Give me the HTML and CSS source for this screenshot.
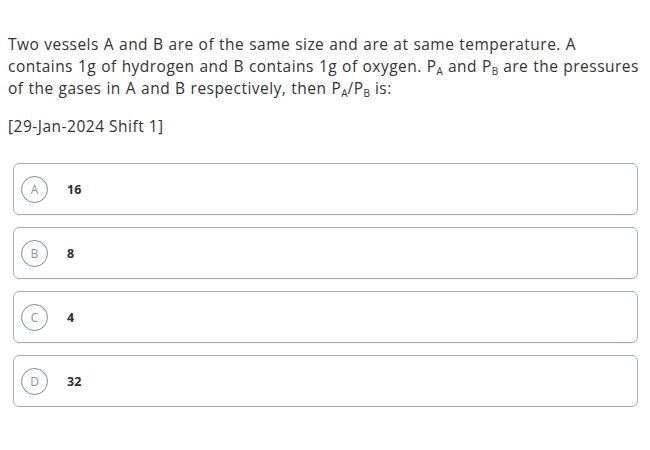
FILE: index.html
```html
<!DOCTYPE html>
<html>
<head>
<meta charset="utf-8">
<link rel="stylesheet" href="styles.css">
</head>
<body>
<div class="question">
  <p class="stem">Two vessels A and B are of the same size and are at same temperature. A<br>contains 1g of hydrogen and B contains 1g of oxygen. P<sub>A</sub> and P<sub>B</sub> are the pressures<br>of the gases in A and B respectively, then P<sub>A</sub>/P<sub>B</sub> is:</p>
  <p class="tag">[29-Jan-2024 Shift 1]</p>
</div>
<div class="options">
  <div class="option"><span class="letter">A</span><span class="value">16</span></div>
  <div class="option"><span class="letter">B</span><span class="value">8</span></div>
  <div class="option"><span class="letter">C</span><span class="value">4</span></div>
  <div class="option"><span class="letter">D</span><span class="value">32</span></div>
</div>
</body>
</html>
```
FILE: styles.css
```css
body {
  margin: 8px;
  font-family: "Open Sans", "DejaVu Sans", sans-serif;
  color: #333;
  background: #fff;
}
.question {
  padding-top: 25px;
}
.stem {
  margin: 0;
  font-size: 15.5px;
  letter-spacing: 0.47px;
  word-spacing: 0.5px;
  line-height: 22px;
  white-space: nowrap;
}
.stem sub {
  font-size: 10px;
  letter-spacing: 0;
  vertical-align: -3px;
  line-height: 0;
}
.tag {
  margin: 16px 0 0;
  font-size: 15.5px;
  letter-spacing: 0.5px;
  line-height: 22px;
}
.options {
  margin: 26px 4px 0 5px;
  display: flex;
  flex-direction: column;
  gap: 12px;
}
.option {
  box-sizing: border-box;
  height: 52px;
  border: 1.5px solid #a3adb8;
  border-radius: 6px;
  display: flex;
  align-items: center;
  padding-left: 7px;
  box-shadow: 0 1px 1px rgba(0,0,0,0.06);
}
.letter {
  box-sizing: border-box;
  width: 27px;
  height: 27px;
  border: 1px solid #7389a0;
  border-radius: 50%;
  display: flex;
  align-items: center;
  justify-content: center;
  font-size: 12px;
  color: #8594a3;
}
.value {
  margin-left: 19px;
  font-size: 12.5px;
  font-weight: 700;
  color: #2b2f36;
}
```
